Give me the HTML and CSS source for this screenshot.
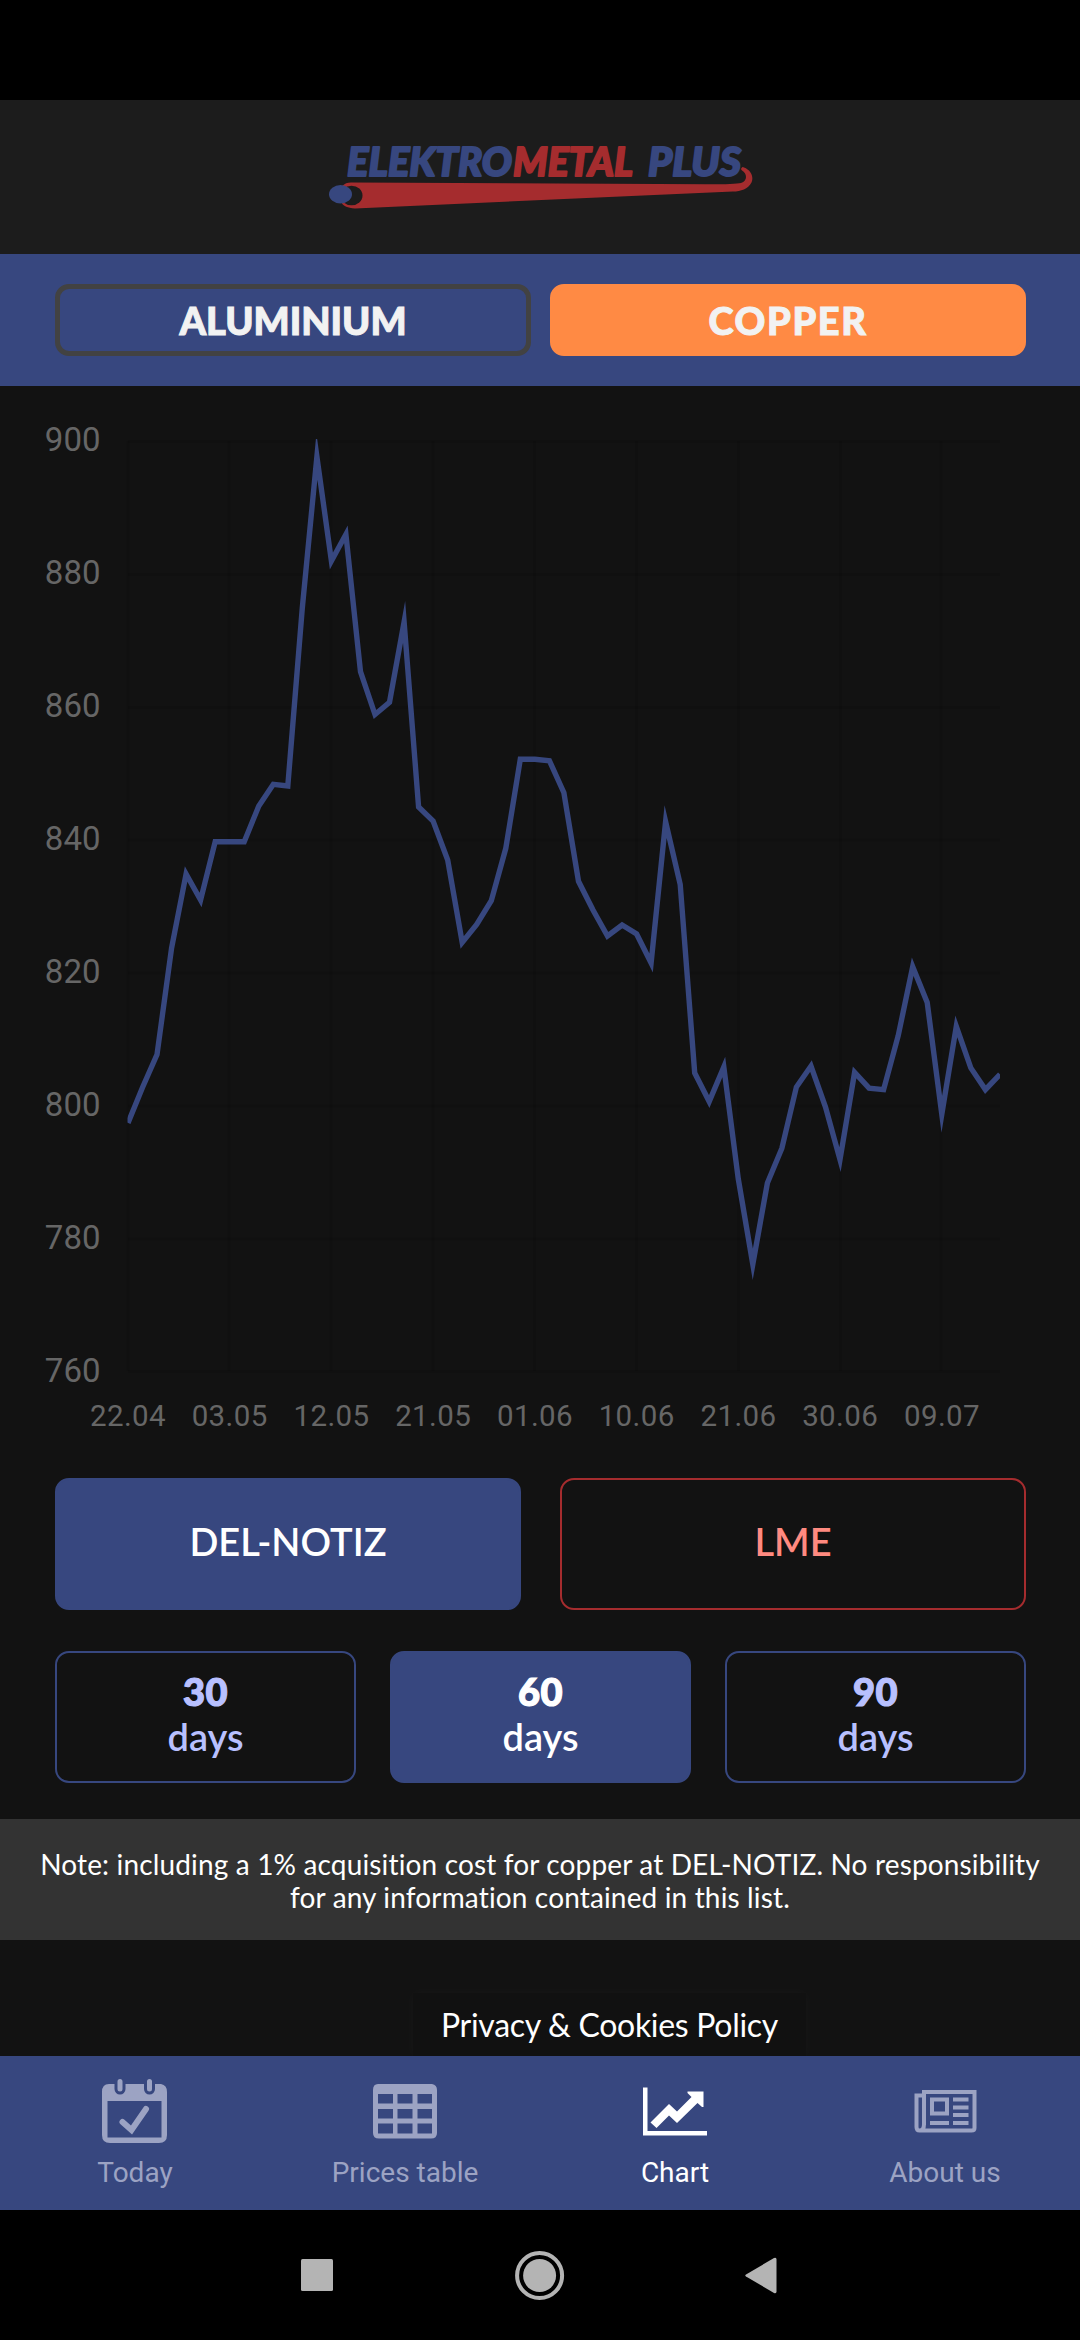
FILE: index.html
```html
<!DOCTYPE html>
<html lang="en">
<head>
    <meta charset="UTF-8">
    <meta name="viewport" content="width=device-width, initial-scale=1.0">
    <title>Chart - Elektrometal Plus</title>
    <link rel="stylesheet" href="styles.css">
</head>
<body>
    <div class="status-bar"></div>

    <header class="header">
        <svg class="logo" viewBox="0 0 430 80" width="430" height="80">
            <!-- Cable -->
            <path class="logo-red" d="M24 27.500 L380 29.300 C400 29.300 410 29 414 28 C421 25.500 420 18.500 415 15.500 A1.800 1.800 0 0 1 417 12.500 C424 15 427 22 424.500 27.500 C421 34 414 36.500 406 36.500 L28 53.500 C20 53 17 51 15 48.500 L15 31 C18 28.500 20 27.500 24 27.500 Z"/>
            <ellipse class="logo-hole" cx="24.500" cy="40.500" rx="11" ry="9.800"/>
            <ellipse class="logo-blue" cx="13.500" cy="39.200" rx="11.500" ry="9.200"/>
            <!-- Company name -->
            <text class="logo-text logo-blue" x="20" y="20.500" textLength="165" lengthAdjust="spacingAndGlyphs">ELEKTRO</text>
            <text class="logo-text logo-red" x="186" y="20.500" textLength="120" lengthAdjust="spacingAndGlyphs">METAL</text>
            <text class="logo-text logo-blue" x="321" y="20.500" textLength="93" lengthAdjust="spacingAndGlyphs">PLUS</text>
        </svg>
    </header>

    <div class="metals">
        <button class="metal-button">ALUMINIUM</button>
        <button class="metal-button metal-active">COPPER</button>
    </div>

    <main class="content">
        <svg class="chart" viewBox="0 386 1080 1060" width="1080" height="1060">
            <defs>
                <clipPath id="plot-area"><rect x="127.500" y="439" width="872.500" height="935"/></clipPath>
            </defs>
            <path class="grid" d="M128 441.500H1000M128 574.500H1000M128 707.500H1000M128 840H1000M128 973H1000M128 1106H1000M128 1239H1000M128 1371.500H1000"/>
            <path class="grid" d="M128 441V1371M229 441V1371M331 441V1371M433 441V1371M534.500 441V1371M636.500 441V1371M738.500 441V1371M840.500 441V1371M941 441V1371"/>
            <polyline class="price-line" clip-path="url(#plot-area)" points="128,1123 142.500,1087.500 157,1054.600 171.600,948 186.100,874 200.600,900 215.200,841.700 229.700,841.700 244.200,841.700 258.800,806 273.300,784.300 287.800,786 302.300,608 316.900,456.700 331.400,561 345.900,534.300 360.500,671.700 375,714.500 389.500,702.300 404.100,622 418.600,807 433.100,821 447.700,860 462.200,942.500 476.700,924.500 491.300,900.700 505.800,848.300 520.300,759.300 534.900,759.300 549.400,760.700 563.900,792.700 578.500,881.300 593,910 607.500,936 622.100,925 636.600,934 651.100,963 665.600,821.700 680.200,884.300 694.700,1072.900 709.200,1101.500 723.800,1067 738.300,1179 752.800,1264.300 767.400,1182.900 781.900,1148.200 796.400,1087 811,1066 825.500,1107 840,1159.600 854.600,1072.500 869.100,1088.200 883.600,1089.600 898.200,1035.700 912.700,966.800 927.200,1002.500 941.800,1114.300 956.300,1026.400 970.800,1067.900 985.400,1089.600 1000,1074.300"/>
            <g class="y-labels">
                <text x="100.500" y="450.500">900</text>
                <text x="100.500" y="583.500">880</text>
                <text x="100.500" y="716.500">860</text>
                <text x="100.500" y="849.500">840</text>
                <text x="100.500" y="982.500">820</text>
                <text x="100.500" y="1115.500">800</text>
                <text x="100.500" y="1248.500">780</text>
                <text x="100.500" y="1381.500">760</text>
            </g>
            <g class="x-labels">
                <text x="128" y="1425.500">22.04</text>
                <text x="229.700" y="1425.500">03.05</text>
                <text x="331.500" y="1425.500">12.05</text>
                <text x="433.200" y="1425.500">21.05</text>
                <text x="535" y="1425.500">01.06</text>
                <text x="636.700" y="1425.500">10.06</text>
                <text x="738.500" y="1425.500">21.06</text>
                <text x="840.200" y="1425.500">30.06</text>
                <text x="942" y="1425.500">09.07</text>
            </g>
        </svg>

        <div class="sources">
            <button class="option option-active">DEL-NOTIZ</button>
            <button class="option option-red">LME</button>
        </div>

        <div class="periods">
            <button class="option"><b>30</b>days</button>
            <button class="option option-active"><b>60</b>days</button>
            <button class="option"><b>90</b>days</button>
        </div>

        <p class="note">Note: including a 1% acquisition cost for copper at DEL-NOTIZ. No responsibility<br>for any information contained in this list.</p>

        <a class="privacy">Privacy &amp; Cookies Policy</a>
    </main>

    <nav class="tabs">
        <a class="tab">
            <svg width="66" height="66" viewBox="0 0 66 66">
                <path fill="currentColor" fill-rule="evenodd" d="M7 6H59Q65 7 65 14V57Q65 65 57 65H8Q0 65 0 57V14Q0 6 7 6ZM5.500 23V59.500H59.500V23Z"/>
                <path class="ring-gap" d="M18 4V11M47.500 4V11"/>
                <path class="ring" d="M18 3.500V11M47.500 3.500V11"/>
                <path class="check" d="M20.500 44L29.500 52L44 31"/>
            </svg>
            <span>Today</span>
        </a>
        <a class="tab">
            <svg width="66" height="66" viewBox="0 0 66 66">
                <path fill="currentColor" fill-rule="evenodd" d="M6 6H60Q65 7 65 12V55Q65 60.500 59 60.500H7Q1 60.500 1 55V12Q1 6 6 6ZM6 16V25.500H21V16ZM25.500 16V25.500H40.500V16ZM45.500 16V25.500H60V16ZM6 31V40.500H21V31ZM25.500 31V40.500H40.500V31ZM45.500 31V40.500H60V31ZM6 45.500V55.500H21V45.500ZM25.500 45.500V55.500H40.500V45.500ZM45.500 45.500V55.500H60V45.500Z"/>
            </svg>
            <span>Prices table</span>
        </a>
        <a class="tab tab-active">
            <svg width="66" height="66" viewBox="0 0 66 66">
                <path fill="currentColor" d="M1 9.500H5.500V53H65V57.500H1ZM8.500 44.500L27 26L35 33.500L49.500 19L45.500 15V13.500H61.500V29H60L55.500 25L35 45L27 37.500L14.500 50Z"/>
            </svg>
            <span>Chart</span>
        </a>
        <a class="tab">
            <svg width="66" height="66" viewBox="0 0 66 66">
                <path class="paper" d="M12 47V14H62.500V50Q62.500 52.500 59.500 52.500H7.500Q4.500 52.500 4.500 49V17.500H11.500M12 46Q12 52.500 7.500 52.500"/>
                <path class="paper" d="M20 21.500H35V35.500H20Z"/>
                <path class="paper" d="M41 21.500H56.500M41 29.500H56.500M41 37H56.500M18 45H37M41 45H56.500"/>
            </svg>
            <span>About us</span>
        </a>
    </nav>

    <div class="system-nav">
        <svg width="50" height="50" viewBox="0 0 50 50"><rect x="8" y="9" width="32" height="32" rx="1.500"/></svg>
        <svg width="50" height="50" viewBox="0 0 50 50"><circle cx="24.600" cy="25.500" r="16.500"/><circle class="home-ring" cx="24.600" cy="25.500" r="22.500"/></svg>
        <svg width="50" height="50" viewBox="0 0 50 50"><path d="M9 24.500L37 8Q39.500 7 39.500 9.500V41.500Q39.500 44 37 43L9 26.500Q7.500 25.500 9 24.500Z"/></svg>
    </div>
</body>
</html>
```

FILE: styles.css
```css
* {
    box-sizing: border-box;
}

body {
    margin: 0;
    width: 1080px;
    height: 2340px;
    overflow: hidden;
    display: flex;
    flex-direction: column;
    background-color: #121212;
    color: #fff;
    font-family: Lato, "Open Sans", sans-serif;
}

button {
    margin: 0;
    padding: 0;
    background: none;
    font-family: inherit;
    cursor: pointer;
}

.status-bar {
    height: 100px;
    background-color: #000;
}

.header {
    height: 154px;
    padding: 55px 0 0 327px;
    background-color: #1c1c1c;
}

.logo {
    display: block;
    overflow: visible;
}

.logo-text {
    font-family: Lato, sans-serif;
    font-size: 40px;
    font-weight: 900;
    font-style: italic;
    stroke-width: 2;
    stroke-linejoin: round;
}

.logo-blue {
    fill: #37477f;
}

.logo-red {
    fill: #a52c2e;
}

.logo-text.logo-blue {
    stroke: #37477f;
}

.logo-text.logo-red {
    stroke: #a52c2e;
}

.logo-hole {
    fill: #1c1c1c;
}

/* Metal switch */
.metals {
    display: flex;
    gap: 19px;
    height: 132px;
    padding: 30px 54px 30px 55px;
    background-color: #37477f;
}

.metal-button {
    flex: 1;
    border: 5px solid #424242;
    border-radius: 14px;
    color: #f2f2f2;
    font-size: 38px;
    font-weight: 900;
    -webkit-text-stroke: 1px #f2f2f2;
}

.metal-active {
    border-color: #ff8a44;
    background-color: #ff8a44;
    letter-spacing: 1.6px;
}

.content {
    position: relative;
    height: 1670px;
}

/* Chart */
.chart {
    display: block;
    font-family: Roboto, sans-serif;
}

.grid {
    fill: none;
    stroke: rgba(0, 0, 0, 0.1);
    stroke-width: 3;
}

.price-line {
    fill: none;
    stroke: #37477f;
    stroke-width: 5.4;
    stroke-miterlimit: 12;
}

.y-labels {
    fill: #666;
    font-size: 33px;
    text-anchor: end;
}

.x-labels {
    fill: #666;
    font-size: 29.500px;
    letter-spacing: 0.4px;
    text-anchor: middle;
}

/* Source and period buttons */
.sources,
.periods {
    display: grid;
    padding: 0 54px 0 55px;
    height: 132px;
}

.sources {
    grid-template-columns: 1fr 1fr;
    gap: 39px;
    margin-top: 32px;
}

.periods {
    grid-template-columns: 1fr 1fr 1fr;
    gap: 34px;
    margin-top: 41px;
}

.option {
    padding-bottom: 6px;
    border: 2px solid #37477f;
    border-radius: 14px;
    color: #b8c0ff;
    font-size: 38px;
    font-weight: 600;
    line-height: 45px;
}

.option b {
    display: block;
    font-weight: 900;
    letter-spacing: 0.5px;
    -webkit-text-stroke: 1.200px currentColor;
}

.option-active {
    background-color: #37477f;
    color: #fff;
}

.option-red {
    border-color: #a52c2e;
    color: #ff8a80;
}

.note {
    height: 121px;
    margin: 36px 0 0;
    padding-top: 29px;
    background-color: #333;
    font-size: 28px;
    letter-spacing: 0.150px;
    line-height: 33px;
    text-align: center;
    white-space: nowrap;
}

/* Policy tab that sits on top of the page */
.privacy {
    position: absolute;
    left: 413px;
    bottom: 0;
    width: 393px;
    height: 63px;
    background-color: #111;
    box-shadow: 0 0 12px rgba(255, 255, 255, 0.03);
    font-size: 32px;
    letter-spacing: -0.300px;
    line-height: 63px;
    text-align: center;
}

/* Bottom tabs */
.tabs {
    position: relative;
    display: flex;
    height: 154px;
    background-color: #37477f;
    font-family: Roboto, sans-serif;
}

.tab {
    flex: 1;
    display: flex;
    flex-direction: column;
    align-items: center;
    padding-top: 22px;
    color: #9ca3c3;
    font-size: 28px;
    line-height: 33px;
}

.tab span {
    margin-top: 12px;
}

.tab-active {
    color: #fff;
}

.ring,
.ring-gap {
    fill: none;
    stroke: currentColor;
    stroke-width: 5;
    stroke-linecap: round;
}

.ring-gap {
    stroke: #37477f;
    stroke-width: 11;
}

.check {
    fill: none;
    stroke: currentColor;
    stroke-width: 6;
    stroke-linecap: round;
}

.paper {
    fill: none;
    stroke: currentColor;
    stroke-width: 4;
}

.system-nav {
    display: flex;
    align-items: center;
    justify-content: center;
    gap: 172px;
    height: 130px;
    background-color: #000;
}

.system-nav svg {
    fill: #b4b4b4;
}

.system-nav .home-ring {
    fill: none;
    stroke: #b4b4b4;
    stroke-width: 4;
}
```
